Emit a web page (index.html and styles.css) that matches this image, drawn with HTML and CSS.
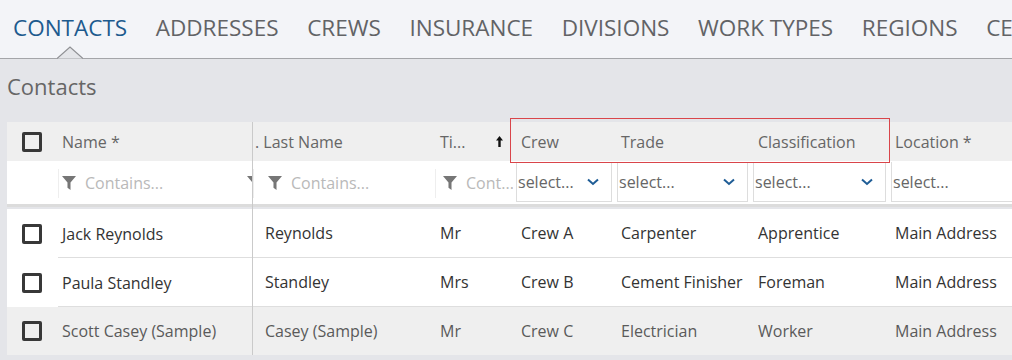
FILE: index.html
```html
<!DOCTYPE html>
<html lang="en">
<head>
    <meta charset="UTF-8">
    <title>Contacts</title>
    <link rel="stylesheet" href="styles.css">
</head>
<body>

    <!-- Tabs -->
    <nav class="tabs">
        <a class="tab active">CONTACTS
            <svg class="notch" viewBox="0 0 26 13"><path d="M0 12.5L13 1L26 12.5"/></svg>
        </a>
        <a class="tab">ADDRESSES</a>
        <a class="tab">CREWS</a>
        <a class="tab">INSURANCE</a>
        <a class="tab">DIVISIONS</a>
        <a class="tab">WORK TYPES</a>
        <a class="tab">REGIONS</a>
        <a class="tab">CE</a>
    </nav>

    <div class="page">
        <h2 class="page-title">Contacts</h2>

        <div class="grid">
            <!-- Frozen pane -->
            <div class="pane frozen">
                <div class="row head">
                    <div class="cell check"><span class="box"></span></div>
                    <div class="cell">Name *</div>
                </div>
                <div class="row filters">
                    <div class="cell check"></div>
                    <div class="cell text-filter">
                        <svg class="funnel" viewBox="0 0 12 12"><path d="M0 0h12L7.3 5.6V12L4.7 10V5.6z"/></svg>
                        <span class="ph">Contains...</span>
                        <svg class="funnel cut" viewBox="0 0 12 12"><path d="M0 0h12L7.3 5.6V12L4.7 10V5.6z"/></svg>
                    </div>
                </div>
                <div class="body">
                    <div class="row">
                        <div class="cell check"><span class="box"></span></div>
                        <div class="cell">Jack Reynolds</div>
                    </div>
                    <div class="row">
                        <div class="cell check"><span class="box"></span></div>
                        <div class="cell">Paula Standley</div>
                    </div>
                    <div class="row sample">
                        <div class="cell check"><span class="box"></span></div>
                        <div class="cell">Scott Casey (Sample)</div>
                    </div>
                </div>
            </div>

            <!-- Scrolling pane -->
            <div class="pane scroll">
                <div class="row head">
                    <div class="cell c-last">. Last Name</div>
                    <div class="cell c-title">Ti...
                        <svg class="sort" viewBox="0 0 7 11"><path d="M3.5 0L7 4.5H4.7V11H2.3V4.5H0z"/></svg>
                    </div>
                    <div class="cell c-crew">Crew</div>
                    <div class="cell c-trade">Trade</div>
                    <div class="cell c-class">Classification</div>
                    <div class="cell c-loc">Location *</div>
                </div>
                <div class="row filters">
                    <div class="cell c-last text-filter">
                        <svg class="funnel" viewBox="0 0 12 12"><path d="M0 0h12L7.3 5.6V12L4.7 10V5.6z"/></svg>
                        <span class="ph">Contains...</span>
                    </div>
                    <div class="cell c-title text-filter">
                        <svg class="funnel" viewBox="0 0 12 12"><path d="M0 0h12L7.3 5.6V12L4.7 10V5.6z"/></svg>
                        <span class="ph">Cont...</span>
                    </div>
                    <div class="cell c-crew sel-cell"><div class="select">select...<svg class="chev" viewBox="0 0 12 8"><path d="M1 1.5l5 4.5 5-4.5"/></svg></div></div>
                    <div class="cell c-trade sel-cell"><div class="select">select...<svg class="chev" viewBox="0 0 12 8"><path d="M1 1.5l5 4.5 5-4.5"/></svg></div></div>
                    <div class="cell c-class sel-cell"><div class="select">select...<svg class="chev" viewBox="0 0 12 8"><path d="M1 1.5l5 4.5 5-4.5"/></svg></div></div>
                    <div class="cell c-loc sel-cell"><div class="select">select...</div></div>
                </div>
                <div class="body">
                    <div class="row">
                        <div class="cell c-last">Reynolds</div>
                        <div class="cell c-title">Mr</div>
                        <div class="cell c-crew">Crew A</div>
                        <div class="cell c-trade">Carpenter</div>
                        <div class="cell c-class">Apprentice</div>
                        <div class="cell c-loc">Main Address</div>
                    </div>
                    <div class="row">
                        <div class="cell c-last">Standley</div>
                        <div class="cell c-title">Mrs</div>
                        <div class="cell c-crew">Crew B</div>
                        <div class="cell c-trade">Cement Finisher</div>
                        <div class="cell c-class">Foreman</div>
                        <div class="cell c-loc">Main Address</div>
                    </div>
                    <div class="row sample">
                        <div class="cell c-last">Casey (Sample)</div>
                        <div class="cell c-title">Mr</div>
                        <div class="cell c-crew">Crew C</div>
                        <div class="cell c-trade">Electrician</div>
                        <div class="cell c-class">Worker</div>
                        <div class="cell c-loc">Main Address</div>
                    </div>
                </div>
            </div>

            <!-- highlight around the grouped columns -->
            <div class="highlight"></div>
        </div>
    </div>

</body>
</html>
```

FILE: styles.css
```css
/* Global */
body {
    margin: 0;
    font-family: "Open Sans", sans-serif;
    background-color: #e4e5e9;
    color: #333;
    overflow: hidden;
}

/* Tabs */
.tabs {
    position: relative;
    z-index: 1;
    display: flex;
    gap: 28.6px;
    height: 58px;
    padding: 0 0 0 13px;
    background-color: #f3f4f8;
    border-bottom: 1px solid #a4a5a9;
    white-space: nowrap;
}

.tab {
    position: relative;
    flex: none;
    height: 58px;
    font-size: 22.5px;
    line-height: 56px;
    color: #626366;
}

.tab.active {
    color: #1d5a8e;
}

/* little notch under the active tab */
.notch {
    position: absolute;
    left: 50%;
    top: 46px;
    width: 26px;
    height: 13px;
    margin-left: -13px;
    fill: #e4e5e9;
    stroke: #8f9094;
    stroke-width: 1.2;
}

.page {
    padding: 0 0 0 7px;
}

.page-title {
    margin: 0;
    padding: 11px 0 0 0;
    height: 48px;
    box-sizing: border-box;
    font-size: 22px;
    font-weight: normal;
    color: #666;
    line-height: 32px;
}

/* Grid */
.grid {
    position: relative;
    display: flex;
    margin-top: 15px;
}

.pane {
    overflow: hidden;
}

.frozen {
    width: 245px;
    flex: none;
    border-right: 1px solid #cacaca;
}

.scroll {
    flex: 1;
}

.row {
    display: flex;
    align-items: center;
    height: 49px;
    box-sizing: border-box;
    background-color: #fff;
    font-size: 16px;
    white-space: nowrap;
}

.cell {
    flex: none;
    display: flex;
    align-items: center;
    height: 100%;
    box-sizing: border-box;
    padding-left: 5px;
    overflow: hidden;
}

.row.head {
    height: 39px;
    background-color: #efefef;
    color: #666;
}

.row.filters {
    height: 46px;
    border-bottom: 3px solid #dcdcdc;
}

.body {
    margin-top: 2px;
}

.body .row {
    border-bottom: 1px solid #dedede;
}

.body .row.sample {
    background-color: #efefef;
    color: #5a5a5a;
    border-bottom: none;
    height: 48px;
}

.frozen .body .row {
    border-bottom: none;
    background-image: linear-gradient(#dedede, #dedede);
    background-size: calc(100% - 51px) 1px;
    background-position: right bottom;
    background-repeat: no-repeat;
}

.frozen .body .row.sample {
    background-image: none;
}

.check {
    width: 51px;
    padding-left: 15px;
}

.frozen .cell:not(.check) {
    width: 194px;
    padding-left: 4px;
}

.box {
    width: 14px;
    height: 14px;
    border: 3px solid #383838;
    border-radius: 2px;
}

/* Text filters */
.text-filter {
    position: relative;
    gap: 9px;
}

.text-filter::before {
    content: "";
    position: absolute;
    left: 0;
    top: 8px;
    bottom: 6px;
    border-left: 1px solid #eee;
}

.frozen .text-filter {
    padding-left: 7px;
}

.funnel {
    width: 14px;
    height: 14px;
    fill: #767676;
    flex: none;
}

.funnel.cut {
    position: absolute;
    right: -9px;
}

.ph {
    color: #b9b9b9;
}

/* Columns of the scrolling pane */
.c-last {
    width: 182px;
    padding-left: 12px;
}

.filters .c-last {
    padding-left: 15px;
}

.head .c-last {
    padding-left: 2px;
}

.c-title {
    width: 78px;
    padding-left: 5px;
}

.filters .c-title {
    padding-left: 8px;
}

.sort {
    width: 7px;
    height: 11px;
    margin-left: 31px;
    fill: #111;
}

.c-crew {
    width: 101px;
    padding-left: 8px;
}

.c-trade {
    width: 136px;
    padding-left: 7px;
}

.c-class {
    width: 138px;
    padding-left: 8px;
}

.c-loc {
    width: 200px;
    padding-left: 7px;
}

/* Select filters */
.row .sel-cell {
    padding: 0 2px 0 3px;
    align-items: flex-start;
}

.select {
    display: flex;
    align-items: center;
    justify-content: space-between;
    width: 100%;
    height: 40px;
    margin-top: 1px;
    padding: 0 12px 0 1px;
    box-sizing: border-box;
    border: 1px solid #ddd;
    border-top: none;
    color: #666;
}

.chev {
    width: 12px;
    height: 8px;
    fill: none;
    stroke: #1f5d96;
    stroke-width: 2;
}

/* Annotation */
.highlight {
    position: absolute;
    left: 503px;
    top: -4px;
    width: 378px;
    height: 43px;
    border: 1px solid #d9454a;
}
```
